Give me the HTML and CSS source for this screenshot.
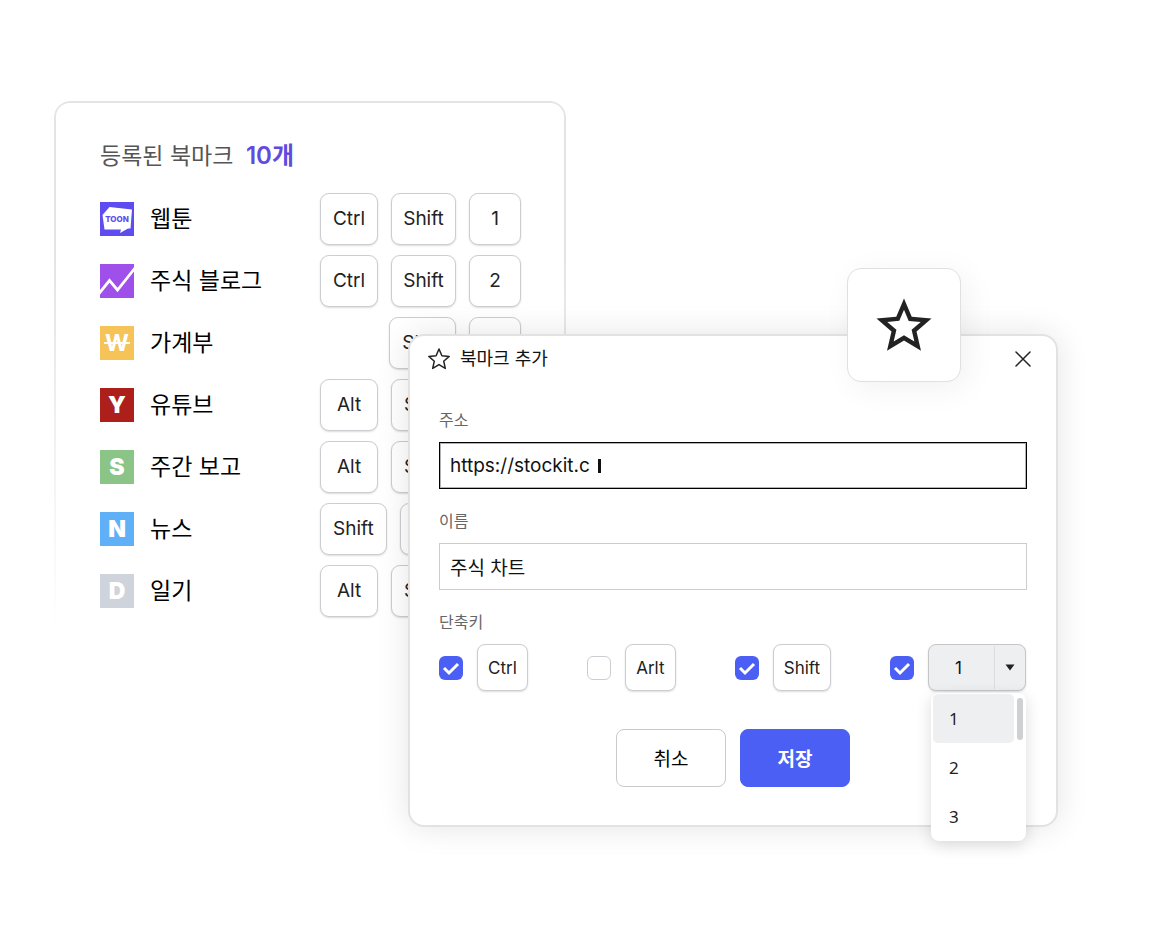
FILE: index.html
```html
<!DOCTYPE html>
<html lang="ko">
<head>
  <meta charset="UTF-8">
  <meta name="viewport" content="width=device-width, initial-scale=1.0">
  <title>북마크 추가</title>
  <link rel="stylesheet" href="styles.css">
</head>
<body>
  <main class="stage">
    <section class="panel">
      <h2 class="panel-title">등록된 북마크 <strong>10개</strong></h2>
      <ul class="bookmarks">
        <li class="bookmark">
          <svg class="icon" viewBox="0 0 34 34" aria-hidden="true">
            <rect width="34" height="34" fill="#5f4cf0"/>
            <path d="M9.500 5L32 7.500L30.500 26.500H28L20 31L21 27.500H4.500L2.500 13Z" fill="#fff"/>
            <text x="17" y="20" text-anchor="middle" class="toon">TOON</text>
          </svg>
          <span class="name">웹툰</span>
          <div class="keys"><kbd>Ctrl</kbd><kbd>Shift</kbd><kbd class="digit">1</kbd></div>
        </li>
        <li class="bookmark">
          <svg class="icon" viewBox="0 0 34 34" aria-hidden="true">
            <rect width="34" height="34" fill="#9f50ea"/>
            <path d="M-1 29.500L9.500 16.500L17.500 26L35 4" fill="none" stroke="#fff" stroke-width="2.800"/>
          </svg>
          <span class="name">주식 블로그</span>
          <div class="keys"><kbd>Ctrl</kbd><kbd>Shift</kbd><kbd class="digit">2</kbd></div>
        </li>
        <li class="bookmark">
          <span class="icon won">W</span>
          <span class="name">가계부</span>
          <div class="keys keys-end"><kbd>Shift</kbd><kbd class="digit"></kbd></div>
        </li>
        <li class="bookmark">
          <span class="icon red">Y</span>
          <span class="name">유튜브</span>
          <div class="keys"><kbd>Alt</kbd><kbd>Shift</kbd></div>
        </li>
        <li class="bookmark">
          <span class="icon green">S</span>
          <span class="name">주간 보고</span>
          <div class="keys"><kbd>Alt</kbd><kbd>Shift</kbd></div>
        </li>
        <li class="bookmark">
          <span class="icon blue">N</span>
          <span class="name">뉴스</span>
          <div class="keys"><kbd>Shift</kbd><kbd class="digit"></kbd></div>
        </li>
        <li class="bookmark">
          <span class="icon gray">D</span>
          <span class="name">일기</span>
          <div class="keys"><kbd>Alt</kbd><kbd>Shift</kbd></div>
        </li>
      </ul>
    </section>

    <section class="dialog">
      <header class="dialog-head">
        <svg class="head-star" viewBox="0 0 24 24" aria-hidden="true">
          <path d="M12 2L14.900 8.700L22.200 9.400L16.700 14.200L18.300 21.400L12 17.600L5.700 21.400L7.300 14.200L1.800 9.400L9.100 8.700Z" fill="none" stroke="#222" stroke-width="1.500" stroke-linejoin="round"/>
        </svg>
        <h1 class="dialog-title">북마크 추가</h1>
        <button type="button" class="close" aria-label="닫기">
          <svg viewBox="0 0 16 16" width="16" height="16"><path d="M1 1L15 15M15 1L1 15" stroke="#222" stroke-width="1.500" stroke-linecap="round"/></svg>
        </button>
      </header>

      <form class="form">
        <label class="label" for="url">주소</label>
        <div class="field focused">
          <input type="text" id="url" value="https://stockit.c">
          <span class="caret"></span>
        </div>

        <label class="label" for="title">이름</label>
        <div class="field">
          <input type="text" id="title" class="wide" value="주식 차트">
        </div>

        <fieldset class="shortcut">
          <legend class="label">단축키</legend>
          <div class="shortcut-row">
            <label class="option"><input type="checkbox" checked><kbd>Ctrl</kbd></label>
            <label class="option"><input type="checkbox"><kbd>Arlt</kbd></label>
            <label class="option"><input type="checkbox" checked><kbd>Shift</kbd></label>
            <div class="option">
              <input type="checkbox" checked aria-label="숫자 키">
              <div class="dropdown">
                <select aria-label="숫자">
                  <option>1</option>
                  <option>2</option>
                  <option>3</option>
                </select>
                <svg class="arrow" viewBox="0 0 30 42" aria-hidden="true"><path d="M10.500 18H19.500L15 24Z" fill="#222"/></svg>
                <div class="menu">
                  <ul>
                    <li><button type="button" class="active">1</button></li>
                    <li><button type="button">2</button></li>
                    <li><button type="button">3</button></li>
                  </ul>
                  <span class="thumb"></span>
                </div>
              </div>
            </div>
          </div>
        </fieldset>

        <div class="actions">
          <button type="button" class="btn">취소</button>
          <button type="submit" class="btn primary">저장</button>
        </div>
      </form>

      <div class="badge">
        <svg viewBox="0 0 24 24" width="66" height="66" aria-hidden="true">
          <path d="M22 9.240l-7.190-.620L12 2 9.190 8.630 2 9.240l5.460 4.730L5.820 21 12 17.270 18.180 21l-1.630-7.030L22 9.240zM12 15.400l-3.760 2.270 1-4.280-3.320-2.880 4.380-.380L12 6.100l1.710 4.040 4.380.380-3.320 2.880 1 4.280L12 15.400z" fill="#222"/>
        </svg>
      </div>
    </section>
  </main>
</body>
</html>
```
FILE: styles.css
```css
*{
  margin: 0;
  padding: 0;
  box-sizing: border-box;
}
body{
  font-family: Inter, "Noto Sans CJK KR", sans-serif;
  background-color: #fff;
  color: #111;
}
button,
input,
select{
  font-family: inherit;
}
ul{
  list-style: none;
}
.stage{
  display: grid;
  grid-template-columns: 354fr 158fr 492fr;
  align-items: start;
  padding: 101px 104px 100px 54px;
}

/* bookmark list */
.panel{
  grid-column: 1 / 3;
  grid-row: 1;
  position: relative;
  padding: 40px 45px 16px 46px;
}
.panel::before{
  content: "";
  position: absolute;
  inset: 0;
  border: 2px solid #e4e4e5;
  border-bottom: none;
  border-radius: 16px 16px 0 0;
  mask-image: linear-gradient(#000 30%, transparent);
}
.panel-title{
  font-size: 23px;
  font-weight: 400;
  line-height: 30px;
  color: #555;
  margin-bottom: 22px;
}
.panel-title strong{
  font-size: 24px;
  font-weight: 600;
  color: #5f4be0;
  margin-left: 6px;
}
.bookmarks{
  display: flex;
  flex-direction: column;
  gap: 10px;
}
.bookmark{
  display: flex;
  align-items: center;
}
.icon{
  flex: none;
  width: 34px;
  height: 34px;
  font-size: 23px;
  font-weight: 900;
  line-height: 34px;
  text-align: center;
  color: #fff;
}
.toon{
  font-size: 8px;
  font-weight: 800;
  fill: #5f4cf0;
}
.won{
  background: linear-gradient(#fff, #fff) center / 26px 2px no-repeat #f6c358;
  font-weight: 700;
}
.red{
  background-color: #ad1f1a;
}
.green{
  background-color: #8bc487;
}
.blue{
  background-color: #60b0f8;
}
.gray{
  background-color: #cfd3dc;
}
.name{
  flex: 1;
  margin-left: 16px;
  font-size: 23px;
  line-height: 34px;
  color: #000;
}
.keys{
  flex: none;
  width: 201px;
  display: flex;
  gap: 13px;
}
.keys-end{
  justify-content: flex-end;
}
kbd{
  display: flex;
  justify-content: center;
  align-items: center;
  min-width: 58px;
  height: 52px;
  padding: 0 12px 1px;
  border: 1px solid #cbcdd0;
  border-radius: 9px;
  background-color: #fff;
  box-shadow: 0 1px 2px rgba(0, 0, 0, 0.14);
  font-family: inherit;
  font-size: 19px;
  color: #222;
}
.digit{
  min-width: 52px;
}

/* add dialog */
.dialog{
  grid-column: 2 / 4;
  grid-row: 1;
  position: relative;
  margin-top: 233px;
  border: 2px solid #e2e2e3;
  border-radius: 16px;
  background-color: #fff;
  box-shadow: 0 0 32px rgba(0, 0, 0, 0.11);
}
.dialog-head{
  display: flex;
  align-items: center;
  height: 46px;
  padding: 0 17px;
}
.head-star{
  width: 24px;
  height: 24px;
}
.dialog-title{
  flex: 1;
  margin-left: 9px;
  padding-bottom: 4px;
  font-size: 18px;
  font-weight: 400;
}
.close{
  display: flex;
  padding: 8px;
  border: none;
  background: none;
  cursor: pointer;
}
.form{
  padding: 26px 29px 38px 29px;
}
.label{
  display: block;
  margin-bottom: 10px;
  font-size: 16px;
  line-height: 24px;
  color: #666;
}
.field{
  display: flex;
  align-items: center;
  height: 47px;
  margin-bottom: 20px;
  padding: 0 10px;
  border: 1px solid #c9cdce;
}
.field.focused{
  border-color: #000;
  outline: 1px solid rgba(0, 0, 0, 0.3);
  outline-offset: -2px;
}
.field input{
  border: none;
  outline: none;
  background: none;
  font-size: 19px;
  color: #111;
  field-sizing: content;
}
.field .wide{
  flex: 1;
}
.caret{
  width: 3px;
  height: 14px;
  margin-left: 8px;
  background-color: #111;
}
.shortcut{
  border: none;
}
.shortcut-row{
  display: flex;
  justify-content: space-between;
  padding-right: 1px;
}
.option{
  display: flex;
  align-items: center;
  gap: 14px;
}
.option kbd{
  min-width: 51px;
  height: 47px;
  padding: 0 10px;
  border-radius: 8px;
  font-size: 17px;
}
.option input{
  appearance: none;
  width: 24px;
  height: 24px;
  border: 1px solid #cbcdd0;
  border-radius: 6px;
}
.option input:checked{
  border: none;
  background: #4c5ff4 url("data:image/svg+xml,%3Csvg xmlns='http://www.w3.org/2000/svg' viewBox='0 0 24 24'%3E%3Cpath d='M5 12L10 17L19 8' fill='none' stroke='white' stroke-width='3'/%3E%3C/svg%3E");
}
.dropdown{
  position: relative;
}
.dropdown select{
  appearance: none;
  display: block;
  width: 98px;
  height: 47px;
  padding-left: 26px;
  border: 1px solid #c4c6c9;
  border-radius: 8px;
  background-color: #eeeff1;
  box-shadow: 0 1px 2px rgba(0, 0, 0, 0.14);
  font-size: 17px;
  color: #111;
}
.arrow{
  position: absolute;
  top: 2px;
  right: 1px;
  width: 31px;
  height: 43px;
  border-left: 1px solid #dcdddf;
  pointer-events: none;
}
.menu{
  position: absolute;
  top: 49px;
  right: 0;
  width: 95px;
  padding: 1px 12px 0 2px;
  border-radius: 8px;
  background-color: #fff;
  box-shadow: 0 4px 16px rgba(0, 0, 0, 0.14);
}
.menu button{
  display: block;
  width: 100%;
  height: 49px;
  padding-left: 16px;
  border: none;
  border-radius: 5px;
  background: none;
  font-family: "Noto Sans", sans-serif;
  font-size: 17px;
  text-align: left;
  color: #222;
}
.menu .active{
  background-color: #eeeff1;
}
.thumb{
  position: absolute;
  top: 5px;
  right: 3px;
  width: 6px;
  height: 42px;
  border-radius: 3px;
  background-color: #cfd0d2;
}
.actions{
  display: flex;
  justify-content: center;
  gap: 14px;
  margin-top: 38px;
}
.btn{
  width: 110px;
  height: 58px;
  padding-bottom: 2px;
  border: 1px solid #c8cacc;
  border-radius: 8px;
  background-color: #fff;
  font-size: 19px;
  font-weight: 400;
  color: #000;
  cursor: pointer;
}
.primary{
  border-color: #4c5ff4;
  background-color: #4c5ff4;
  font-weight: 700;
  color: #fff;
}
.badge{
  position: absolute;
  top: -68px;
  right: 95px;
  display: flex;
  justify-content: center;
  align-items: center;
  width: 114px;
  height: 114px;
  padding-top: 2px;
  border: 1px solid #e0e0e1;
  border-radius: 14px;
  background-color: #fff;
  box-shadow: 6px 6px 32px rgba(0, 0, 0, 0.06);
}
```
